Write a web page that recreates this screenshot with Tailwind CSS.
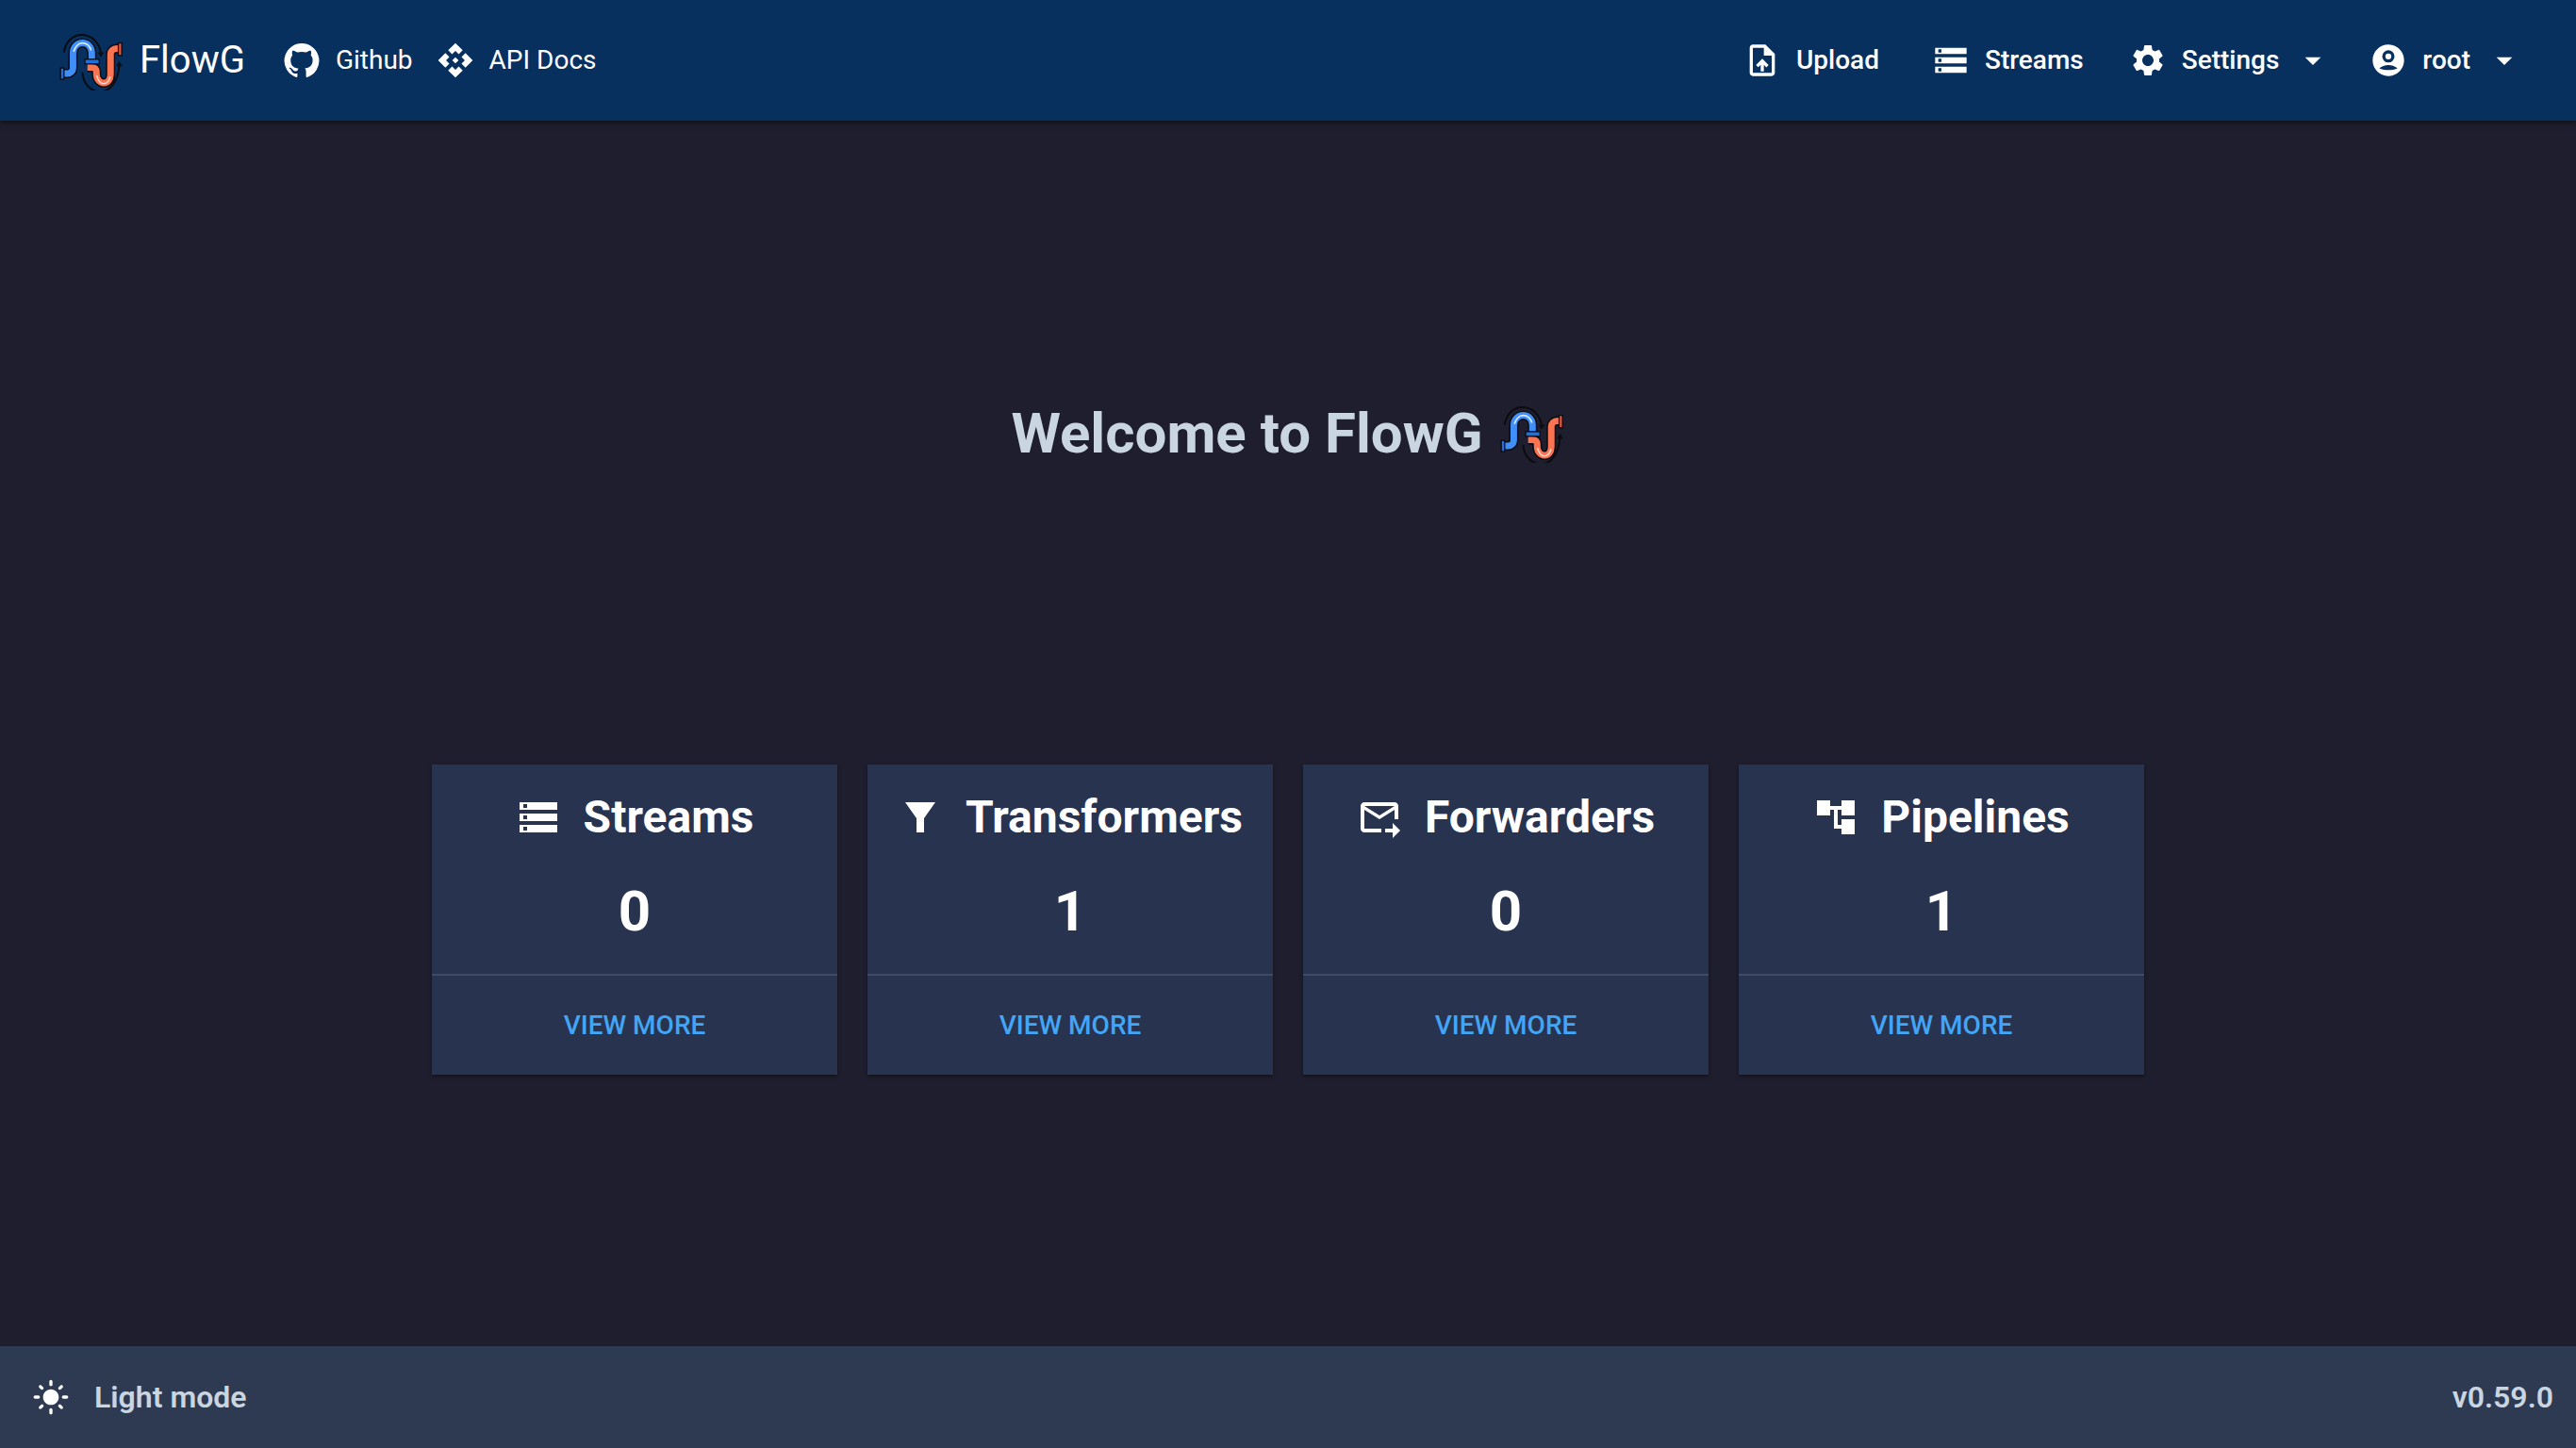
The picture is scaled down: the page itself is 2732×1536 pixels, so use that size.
<!DOCTYPE html>
<html lang="en">
<head>
    <meta charset="UTF-8">
    <title>FlowG</title>
    <script src="https://cdn.jsdelivr.net/npm/@tailwindcss/browser@4"></script>
</head>
<body class="bg-[#1e1e2e] h-screen flex flex-col overflow-hidden font-['Roboto',sans-serif]">
    <svg class="hidden">
        <symbol id="logo" viewBox="40 30 210 190">
            <!-- arrows -->
            <path d="M57 98C62 62 88 42 112 42C145 42 170 65 175 100" fill="none" stroke="#0b0b10" stroke-width="6"/>
            <path d="M165 98L175 114L185 98Z" fill="#0b0b10"/>
            <path d="M116 162C118 200 145 224 172 224C205 224 230 190 234 140" fill="none" stroke="#0b0b10" stroke-width="6"/>
            <path d="M224 142L234 126L244 142Z" fill="#0b0b10"/>
            <!-- blue pipe -->
            <path d="M52 166H68C78 166 86 158 86 148V100C86 80 100 68 116 68C134 68 146 82 146 100V122" fill="none" stroke="#0b0b10" stroke-width="30"/>
            <path d="M52 166H68C78 166 86 158 86 148V100C86 80 100 68 116 68C134 68 146 82 146 100V122" fill="none" stroke="#3f8ff7" stroke-width="21"/>
            <path d="M88 96C92 82 102 68 116 68C130 68 140 78 144 92" fill="none" stroke="#d9ecff" stroke-width="5"/>
            <rect x="44" y="146" width="15" height="40" fill="#0b0b10"/>
            <rect x="48" y="150" width="7" height="32" fill="#1f6fe0"/>
            <!-- red pipe -->
            <path d="M132 146H146C156 146 161 152 161 160V168C161 186 174 196 184 196C198 196 206 184 206 168V104C206 94 214 86 226 86H236" fill="none" stroke="#0b0b10" stroke-width="30"/>
            <path d="M132 146H146C156 146 161 152 161 160V168C161 186 174 196 184 196C198 196 206 184 206 168V104C206 94 214 86 226 86H236" fill="none" stroke="#fb7452" stroke-width="21"/>
            <path d="M162 172C166 188 174 198 184 198C194 198 202 188 205 176" fill="none" stroke="#ffd5cc" stroke-width="5"/>
            <rect x="229" y="66" width="15" height="44" fill="#0b0b10"/>
            <rect x="233" y="70" width="7" height="36" fill="#e5533a"/>
            <!-- collar -->
            <rect x="122" y="118" width="50" height="19" fill="#0b0b10"/>
            <rect x="126" y="122" width="42" height="11" fill="#1f6fe0"/>
        </symbol>
    </svg>

    <header class="h-[128px] shrink-0 bg-[#07305f] shadow-[0_2px_6px_rgba(0,0,0,0.5)] flex items-center text-white relative z-10">
        <svg class="w-[70px] h-[63px] ml-[62px]"><use href="#logo"/></svg>
        <span class="ml-[16px] text-[40px] leading-none">FlowG</span>

        <a class="flex items-center gap-4 ml-[40px]">
            <svg class="w-10 h-10 fill-white" viewBox="0 0 24 24"><path d="M12 1.27a11 11 0 00-3.48 21.46c.55.09.73-.28.73-.55v-1.84c-3.03.64-3.67-1.46-3.67-1.46-.55-1.29-1.28-1.65-1.28-1.65-.92-.65.1-.65.1-.65 1.1 0 1.73 1.1 1.73 1.1.92 1.65 2.57 1.2 3.21.92a2 2 0 01.64-1.47c-2.47-.27-5.04-1.19-5.04-5.5 0-1.1.46-2.1 1.2-2.84a3.76 3.76 0 010-2.93s.91-.28 3.11 1.1c1.8-.45 3.7-.45 5.5 0 2.1-1.38 3.02-1.1 3.02-1.1a3.76 3.76 0 010 2.93c.83.74 1.2 1.74 1.2 2.94 0 4.21-2.57 5.13-5.04 5.4.45.37.82.92.82 2.02v3.03c0 .27.1.64.73.55A11 11 0 0012 1.27"/></svg>
            <span class="text-[28px]">Github</span>
        </a>
        <a class="flex items-center gap-4 ml-[25px]">
            <svg class="w-10 h-10 fill-white" viewBox="0 0 24 24"><path d="M14 12l-2 2-2-2 2-2 2 2zm-2-6l2.12 2.12 2.5-2.5L12 1 7.38 5.62l2.5 2.5L12 6zm-6 6l2.12-2.12-2.5-2.5L1 12l4.62 4.62 2.5-2.5L6 12zm12 0l-2.12 2.12 2.5 2.5L23 12l-4.62-4.62-2.5 2.5L18 12zm-6 6l-2.12-2.12-2.5 2.5L12 23l4.62-4.62-2.5-2.5L12 18z"/></svg>
            <span class="text-[28px]">API Docs</span>
        </a>

        <nav class="ml-auto mr-[56px] flex items-center text-[28px] font-medium">
            <a class="flex items-center gap-4">
                <svg class="w-10 h-10 fill-white" viewBox="0 0 24 24"><path d="M14 2H6c-1.1 0-1.99.9-1.99 2L4 20c0 1.1.89 2 1.99 2H18c1.1 0 2-.9 2-2V8l-6-6zm4 18H6V4h7v5h5v11zM8 15.01l1.41 1.41L11 14.84V19h2v-4.16l1.59 1.59L16 15.01 12.01 11z"/></svg>
                Upload
            </a>
            <a class="flex items-center gap-4 ml-[56px]">
                <svg class="w-10 h-10 fill-white" viewBox="0 0 24 24"><path d="M2 20h20v-4H2v4zm2-3h2v2H4v-2zM2 4v4h20V4H2zm4 3H4V5h2v2zm-4 7h20v-4H2v4zm2-3h2v2H4v-2z"/></svg>
                Streams
            </a>
            <a class="flex items-center ml-[48px]">
                <svg class="w-10 h-10 fill-white" viewBox="0 0 24 24"><path d="M19.14 12.94c.04-.3.06-.61.06-.94 0-.32-.02-.64-.07-.94l2.03-1.58c.18-.14.23-.41.12-.61l-1.92-3.32c-.12-.22-.37-.29-.59-.22l-2.39.96c-.5-.38-1.03-.7-1.62-.94l-.36-2.54c-.04-.24-.24-.41-.48-.41h-3.84c-.24 0-.43.17-.47.41l-.36 2.54c-.59.24-1.13.57-1.62.94l-2.39-.96c-.22-.08-.47 0-.59.22L2.74 8.87c-.12.21-.08.47.12.61l2.03 1.58c-.05.3-.09.63-.09.94s.02.64.07.94l-2.03 1.58c-.18.14-.23.41-.12.61l1.92 3.32c.12.22.37.29.59.22l2.39-.96c.5.38 1.03.7 1.62.94l.36 2.54c.05.24.24.41.48.41h3.84c.24 0 .44-.17.47-.41l.36-2.54c.59-.24 1.13-.56 1.62-.94l2.39.96c.22.08.47 0 .59-.22l1.92-3.32c.12-.22.07-.47-.12-.61l-2.01-1.58zM12 15.6c-1.98 0-3.6-1.62-3.6-3.6s1.62-3.6 3.6-3.6 3.6 1.62 3.6 3.6-1.62 3.6-3.6 3.6z"/></svg>
                <span class="ml-4">Settings</span>
                <svg class="w-10 h-10 fill-white ml-[16px]" viewBox="0 0 24 24"><path d="M7 10l5 5 5-5z"/></svg>
            </a>
            <a class="flex items-center ml-[40px]">
                <svg class="w-10 h-10 fill-white" viewBox="0 0 24 24"><path fill-rule="evenodd" d="M12 2C6.48 2 2 6.48 2 12s4.48 10 10 10 10-4.48 10-10S17.52 2 12 2zM12 5.6a3.9 3.9 0 1 1 0 7.8a3.9 3.9 0 1 1 0-7.8zM12 7.6a1.9 1.9 0 1 0 0 3.8a1.9 1.9 0 1 0 0-3.8zM6.2 17.1C7.8 15.8 9.8 15 12 15s4.2.8 5.8 2.1C16.2 17.9 14 18.2 12 18.2s-4.2-.3-5.8-1.1z"/></svg>
                <span class="ml-4">root</span>
                <svg class="w-10 h-10 fill-white ml-[16px]" viewBox="0 0 24 24"><path d="M7 10l5 5 5-5z"/></svg>
            </a>
        </nav>
    </header>

    <main class="flex-1 flex flex-col items-center pt-[300px]">
        <h1 class="flex items-center text-6xl font-bold leading-none text-slate-300">
            Welcome to FlowG
            <svg class="w-[70px] h-[63px] ml-[17px]"><use href="#logo"/></svg>
        </h1>

        <div class="grid grid-cols-[repeat(4,430px)] gap-8 mt-[320px]">
            <div class="bg-[#283350] shadow-[0_2px_4px_rgba(0,0,0,0.4)] text-white">
                <div class="h-[224px] flex flex-col items-center border-b-2 border-[#414b66]">
                    <div class="flex items-center gap-[24px] mt-[31px] text-5xl font-bold leading-[50px]">
                        <svg class="w-12 h-12 fill-white" viewBox="0 0 24 24"><path d="M2 20h20v-4H2v4zm2-3h2v2H4v-2zM2 4v4h20V4H2zm4 3H4V5h2v2zm-4 7h20v-4H2v4zm2-3h2v2H4v-2z"/></svg>
                        Streams
                    </div>
                    <div class="text-6xl font-bold leading-none mt-[45px]">0</div>
                </div>
                <a class="h-[105px] flex items-center justify-center text-[28px] font-medium text-[#42a5f5]">VIEW MORE</a>
            </div>

            <div class="bg-[#283350] shadow-[0_2px_4px_rgba(0,0,0,0.4)] text-white">
                <div class="h-[224px] flex flex-col items-center border-b-2 border-[#414b66]">
                    <div class="flex items-center gap-[24px] mt-[31px] text-5xl font-bold leading-[50px]">
                        <svg class="w-12 h-12 fill-white" viewBox="0 0 24 24"><path d="M4 4h16l-6 8.5V20h-4v-7.5z"/></svg>
                        Transformers
                    </div>
                    <div class="text-6xl font-bold leading-none mt-[45px]">1</div>
                </div>
                <a class="h-[105px] flex items-center justify-center text-[28px] font-medium text-[#42a5f5]">VIEW MORE</a>
            </div>

            <div class="bg-[#283350] shadow-[0_2px_4px_rgba(0,0,0,0.4)] text-white">
                <div class="h-[224px] flex flex-col items-center border-b-2 border-[#414b66]">
                    <div class="flex items-center gap-[24px] mt-[31px] text-5xl font-bold leading-[50px]">
                        <svg class="w-12 h-12 fill-white" viewBox="0 0 24 24"><path d="M20 4H4c-1.1 0-2 .9-2 2v12c0 1.1.9 2 2 2h9v-2H4V8l8 5 8-5v5h2V6c0-1.1-.9-2-2-2zm-8 7L4 6h16l-8 5zm7 4l4 4-4 4v-3h-4v-2h4v-3z"/></svg>
                        Forwarders
                    </div>
                    <div class="text-6xl font-bold leading-none mt-[45px]">0</div>
                </div>
                <a class="h-[105px] flex items-center justify-center text-[28px] font-medium text-[#42a5f5]">VIEW MORE</a>
            </div>

            <div class="bg-[#283350] shadow-[0_2px_4px_rgba(0,0,0,0.4)] text-white">
                <div class="h-[224px] flex flex-col items-center border-b-2 border-[#414b66]">
                    <div class="flex items-center gap-[24px] mt-[31px] text-5xl font-bold leading-[50px]">
                        <svg class="w-12 h-12 fill-white" viewBox="0 0 24 24"><path d="M22 11V3h-7v3H9V3H2v8h7V8h2v10h4v3h7v-8h-7v3h-2V8h2v3z"/></svg>
                        Pipelines
                    </div>
                    <div class="text-6xl font-bold leading-none mt-[45px]">1</div>
                </div>
                <a class="h-[105px] flex items-center justify-center text-[28px] font-medium text-[#42a5f5]">VIEW MORE</a>
            </div>
        </div>
    </main>

    <footer class="h-[108px] shrink-0 bg-[#2d3a52] flex items-center justify-between pl-[34px] pr-6 text-[32px] font-semibold text-slate-300">
        <div class="flex items-center gap-[26px]">
            <svg class="w-10 h-10 fill-white" viewBox="0 0 24 24"><path d="M12 7c-2.76 0-5 2.24-5 5s2.24 5 5 5 5-2.24 5-5-2.24-5-5-5zM2 13h2c.55 0 1-.45 1-1s-.45-1-1-1H2c-.55 0-1 .45-1 1s.45 1 1 1zm18 0h2c.55 0 1-.45 1-1s-.45-1-1-1h-2c-.55 0-1 .45-1 1s.45 1 1 1zM11 2v2c0 .55.45 1 1 1s1-.45 1-1V2c0-.55-.45-1-1-1s-1 .45-1 1zm0 18v2c0 .55.45 1 1 1s1-.45 1-1v-2c0-.55-.45-1-1-1s-1 .45-1 1zM5.99 4.58c-.39-.39-1.03-.39-1.41 0-.39.39-.39 1.03 0 1.41l1.06 1.06c.39.39 1.03.39 1.41 0s.39-1.03 0-1.41L5.99 4.58zm12.37 12.37c-.39-.39-1.03-.39-1.41 0-.39.39-.39 1.03 0 1.41l1.06 1.06c.39.39 1.03.39 1.41 0 .39-.39.39-1.03 0-1.41l-1.06-1.06zm1.06-10.96c.39-.39.39-1.03 0-1.41-.39-.39-1.03-.39-1.41 0l-1.06 1.06c-.39.39-.39 1.03 0 1.41s1.03.39 1.41 0l1.06-1.06zM7.05 18.36c.39-.39.39-1.03 0-1.41-.39-.39-1.03-.39-1.41 0l-1.06 1.06c-.39.39-.39 1.03 0 1.41s1.03.39 1.41 0l1.06-1.06z"/></svg>
            Light mode
        </div>
        <span>v0.59.0</span>
    </footer>
</body>
</html>
